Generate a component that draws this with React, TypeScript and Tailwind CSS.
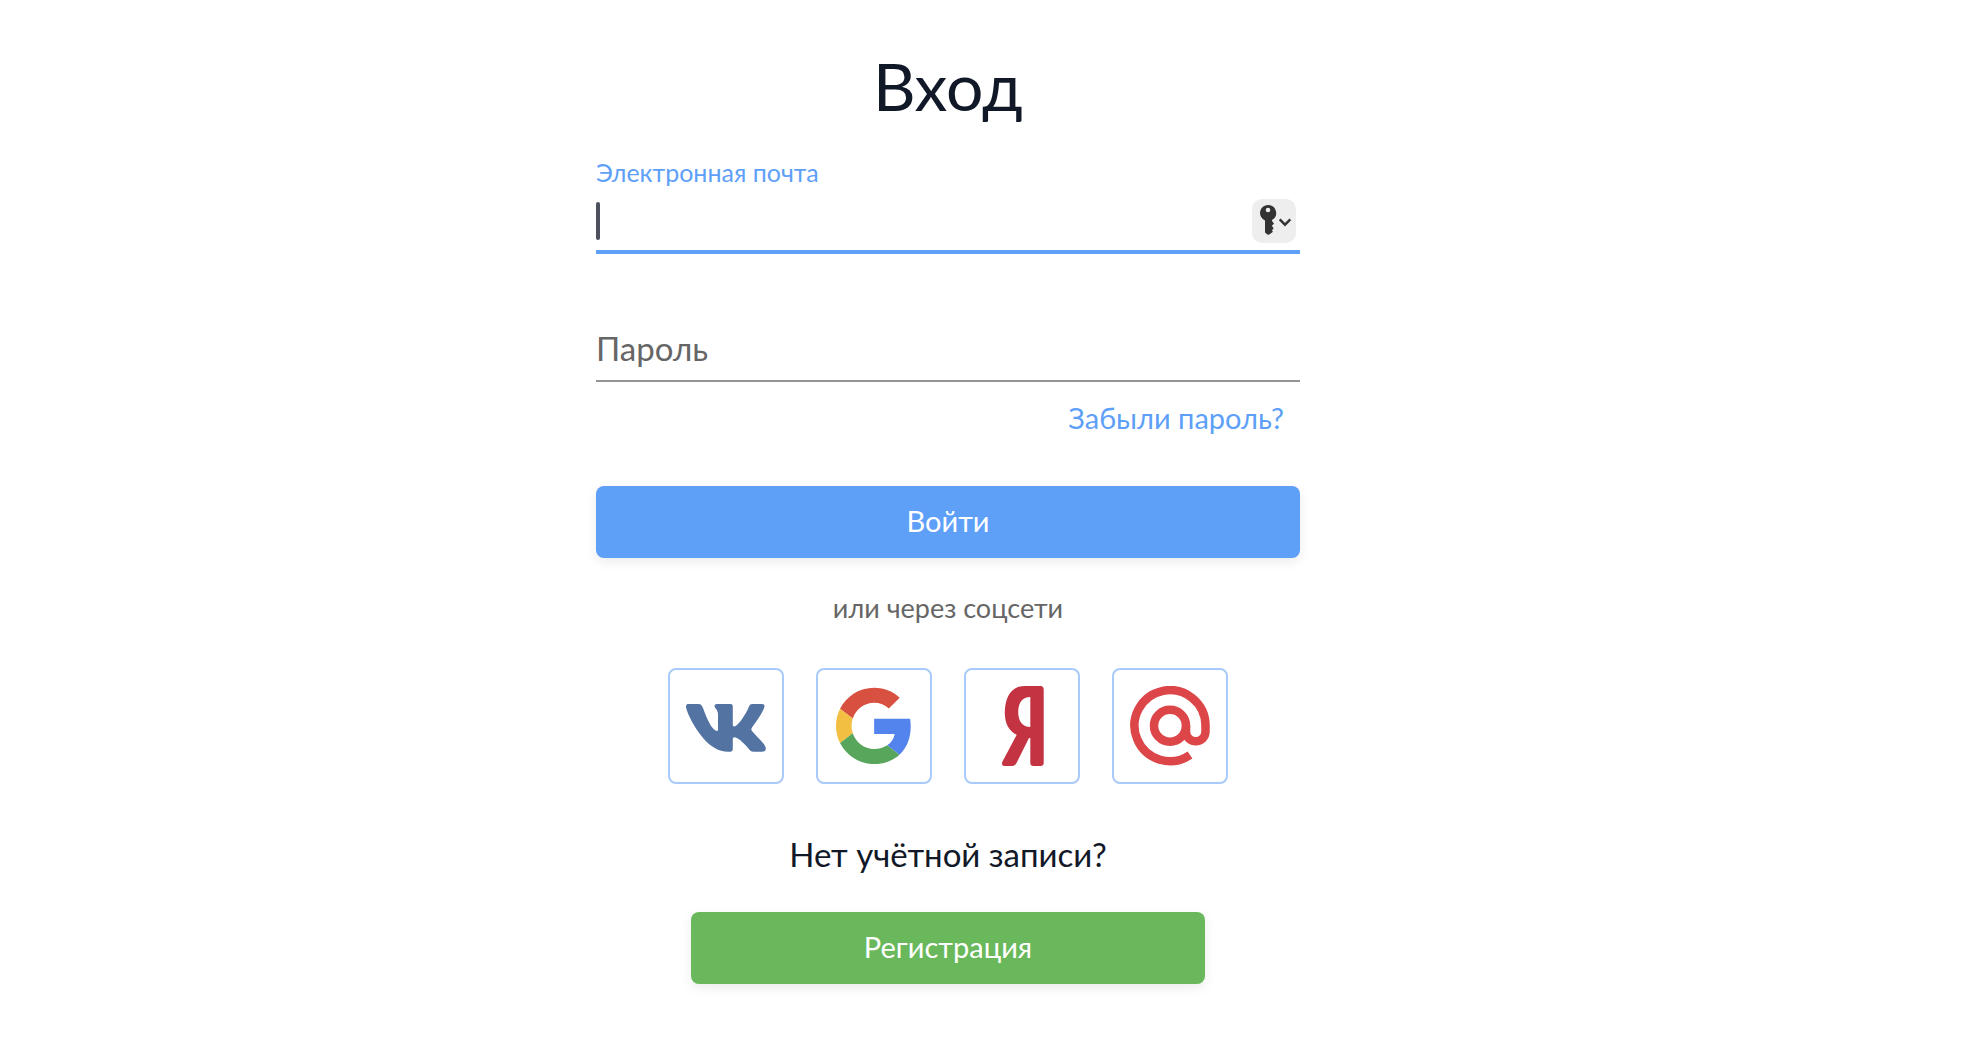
import React, { useState } from 'react';

function VkIcon() {
  return (
    <svg viewBox="0 0 80 80" className="size-20" fill="#5374a3" aria-hidden="true">
      <path d="M2 18H12.500C15 18 15.800 19.200 17 22C20.500 32 26 44.500 31 45C31.700 45 32 44.500 32 43V28C31.800 23.500 28.500 22 28.500 20C28.500 18.800 29.500 18 31 18H44.500C46.300 18 46.800 19 46.800 21V38.500C46.800 40 47.400 40.600 48.400 40.600C52.500 39.500 60 28 63 20.500C63.700 18.800 64.500 18 66.500 18H76C78.400 18 78.900 19.300 78.300 21.300C76.500 27.500 67 40 66 41.500C65 43 65.200 43.800 66 45C69 49 77 55.500 79.500 61C80.500 63.800 79 65.700 76 65.700H67.500C65 65.700 63.800 64.400 62 62C57 56 51 51.300 48.300 51.300C47.100 51.300 46.800 52 46.800 53.500V62.500C46.800 65 46 65.800 42 65.800C33 65.800 24 60.500 17 52C8 41 2 29 0 21.500C0 19.300 .3 18 2 18Z" />
    </svg>
  );
}

function GoogleIcon() {
  return (
    <svg viewBox="-1.25 -1.1 50.3 50.3" className="size-20" aria-hidden="true">
      <path fill="#d85040" d="M24 9.5c3.54 0 6.71 1.22 9.21 3.6l6.85-6.85C35.9 2.38 30.47 0 24 0 14.62 0 6.51 5.38 2.56 13.22l7.98 6.19C12.43 13.72 17.74 9.5 24 9.5z" />
      <path fill="#5383ec" d="M46.98 24.55c0-1.57-.15-3.55-.38-5.1H24v9.57h12.94c-.58 2.96-2.26 5.48-4.78 7.18l7.73 6c4.51-4.18 7.09-10.36 7.09-17.65z" />
      <path fill="#f2bf42" d="M10.53 28.59c-.48-1.45-.76-2.99-.76-4.59s.27-3.14.76-4.59l-7.98-6.19C.92 16.46 0 20.12 0 24c0 3.88.92 7.54 2.56 10.78l7.97-6.19z" />
      <path fill="#58a55c" d="M24 48c6.48 0 11.93-2.13 15.89-5.81l-7.73-6c-2.15 1.45-4.92 2.3-8.16 2.3-6.26 0-11.57-4.22-13.47-9.91l-7.98 6.19C6.51 42.62 14.62 48 24 48z" />
    </svg>
  );
}

function YandexIcon() {
  return (
    <svg viewBox="0 0 80 80" className="size-20" fill="#c43341" fillRule="evenodd" aria-hidden="true">
      <path d="M42.500 0H58.500Q61.700 0 61.700 3.500V77Q61.700 80 58.500 80H51.500Q48.300 80 48.300 76.500V52H47L34.500 77Q33 80 30 80H22.500Q18.800 80 20.500 75.500L34.700 48.800C27 45 22.800 37.500 22.800 27C22.800 10.500 30 0 42.500 0ZM48.300 11C40.500 11 36.200 16.500 36.200 26C36.200 35.500 40.800 41 48.300 41Z" />
    </svg>
  );
}

function MailIcon() {
  return (
    <svg viewBox="0 0 80 80" className="size-20" fill="none" stroke="#dd4648" strokeWidth="8.500" aria-hidden="true">
      <circle cx="40" cy="39.700" r="16" />
      <path d="M56 39.700V45.500A9.750 9.750 0 0 0 75.500 45.500V39.700A35.500 35.500 0 1 0 60 69" />
    </svg>
  );
}

function KeyIcon() {
  return (
    <svg viewBox="0 0 44 44" className="size-11" aria-hidden="true">
      <path
        fill="#333"
        fillRule="evenodd"
        d="M16 6a8 8 0 0 1 4 15v1l2 2.500-2.200 2.500 1.500 1.600V30l-1.500 1.300 1.200 1.500-4.200 3h-1L13 33.500V21.400A8 8 0 0 1 16 6Zm0 2.700a2.300 2.300 0 1 0 0 4.600 2.300 2.300 0 0 0 0-4.600Z"
      />
      <path d="m27.700 20.400 5.300 5.300 5.300-5.300" fill="none" stroke="#333" strokeWidth="2.400" />
    </svg>
  );
}

const socials = [
  { name: 'ВКонтакте', Icon: VkIcon },
  { name: 'Google', Icon: GoogleIcon },
  { name: 'Яндекс', Icon: YandexIcon },
  { name: 'Mail.ru', Icon: MailIcon },
];

export default function App() {
  const [email, setEmail] = useState('');
  const [password, setPassword] = useState('');

  return (
    <main className="flex min-h-screen flex-col items-center bg-white pt-[46px] pr-[70px] pb-14 font-[Lato,'Open_Sans',sans-serif] text-[#111827]">
      <form className="flex w-full max-w-[704px] flex-col" onSubmit={e => e.preventDefault()}>
        <h1 className="text-center text-[66px] leading-20">Вход</h1>

        <label htmlFor="email" className="mt-7 text-[25px] leading-9 text-[#5e9ff8]">
          Электронная почта
        </label>
        <div className="relative flex h-16 items-center border-b-4 border-[#5e9ff8] pt-0.5">
          <input
            id="email"
            type="email"
            value={email}
            onChange={e => setEmail(e.target.value)}
            className="h-full min-w-0 flex-1 text-[33px] caret-transparent outline-none"
          />
          {!email && <span className="absolute left-0 h-[38px] w-1 rounded-xs bg-[#4d515f]" />}
          <button type="button" aria-label="Сохранённые пароли" className="mr-1 rounded-[10px] bg-[#eee]">
            <KeyIcon />
          </button>
        </div>

        <input
          type="password"
          aria-label="Пароль"
          placeholder="Пароль"
          value={password}
          onChange={e => setPassword(e.target.value)}
          className="mt-16 h-16 border-b-2 border-[#949494] pb-0.5 text-[33px] outline-none placeholder:text-[#666]"
        />
        <a href="#" className="mt-4 mr-4 self-end text-[29px] leading-10 text-[#5e9ff8]">
          Забыли пароль?
        </a>

        <button type="submit" className="mt-12 h-[72px] rounded-lg bg-[#5e9ff8] pb-0.5 text-[29px] text-white shadow-[0_4px_12px_rgba(0,0,0,0.08)]">
          Войти
        </button>
      </form>

      <p className="mt-[30px] text-[27px] leading-10 text-[#666]">или через соцсети</p>

      <div className="mt-10 flex gap-8">
        {socials.map(({ name, Icon }) => (
          <button key={name} type="button" aria-label={name} className="rounded-lg border-2 border-[#a9cbfb] p-4">
            <Icon />
          </button>
        ))}
      </div>

      <h2 className="mt-[46px] text-[33px] leading-12">Нет учётной записи?</h2>
      <button type="button" className="mt-[34px] h-[72px] w-full max-w-[514px] rounded-lg bg-[#6ab85c] pb-0.5 text-[29px] text-white shadow-[0_4px_12px_rgba(0,0,0,0.08)]">
        Регистрация
      </button>
    </main>
  );
}
